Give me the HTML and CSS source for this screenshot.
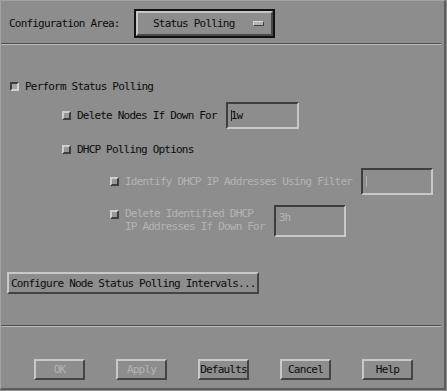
FILE: index.html
```html
<!DOCTYPE html>
<html>
<head>
<meta charset="utf-8">
<link rel="stylesheet" href="styles.css">
</head>
<body>
<div class="dialog">
  <div class="header">
    <span class="label">Configuration Area:</span>
    <div class="option">
      <div class="option-inner">
        <span class="option-text">Status Polling</span>
        <span class="indicator"></span>
      </div>
    </div>
  </div>
  <div class="sep"></div>
  <div class="work">
    <div class="row row1">
      <span class="cb cb-set"></span>
      <span class="text">Perform Status Polling</span>
    </div>
    <div class="row row2">
      <span class="cb"></span>
      <span class="text">Delete Nodes If Down For</span>
      <span class="field field-a"><span class="caret"></span>1w</span>
    </div>
    <div class="row row3">
      <span class="cb"></span>
      <span class="text">DHCP Polling Options</span>
    </div>
    <div class="row row4">
      <span class="cb"></span>
      <span class="text dis">Identify DHCP IP Addresses Using Filter</span>
      <span class="field field-b"><span class="caret"></span></span>
    </div>
    <div class="row row5">
      <span class="cb cb-top"></span>
      <span class="text dis two">Delete Identified DHCP<br>IP Addresses If Down For</span>
      <span class="field field-c"><span class="dis">3h</span></span>
    </div>
    <div class="cfg-wrap">
      <button class="btn cfg">Configure Node Status Polling Intervals...</button>
    </div>
  </div>
  <div class="sep"></div>
  <div class="buttons">
    <button class="btn act dis">OK</button>
    <button class="btn act dis">Apply</button>
    <button class="btn act">Defaults</button>
    <button class="btn act">Cancel</button>
    <button class="btn act">Help</button>
  </div>
</div>
</body>
</html>
```

FILE: styles.css
```css
html, body {
  margin: 0;
  padding: 0;
  background: #8d8d8d;
}

body {
  width: 447px;
  height: 391px;
  overflow: hidden;
  font-family: "DejaVu Sans Mono", "Liberation Mono", monospace;
  font-size: 11px;
  letter-spacing: -0.8px;
  color: #0c0c0c;
}

.dialog {
  box-sizing: border-box;
  width: 446px;
  height: 390px;
  border-top: 1px solid #a4a4a4;
  border-left: 1px solid #a4a4a4;
  border-right: 2px solid #5c5c5c;
  border-bottom: 2px solid #5c5c5c;
  display: flex;
  flex-direction: column;
}

.header {
  height: 42px;
  display: flex;
  align-items: center;
  padding-left: 8px;
}

.label {
  width: 125px;
  padding-top: 2px;
}

.option {
  box-sizing: border-box;
  width: 141px;
  height: 29px;
  border: 2px solid #111;
  margin-top: 2px;
}

.option-inner {
  box-sizing: border-box;
  height: 100%;
  border-top: 2px solid #c6c6c6;
  border-left: 2px solid #c6c6c6;
  border-right: 2px solid #4a4a4a;
  border-bottom: 2px solid #4a4a4a;
  display: flex;
  align-items: center;
  padding-left: 15px;
  padding-right: 7px;
}

.option-text {
  flex: 1;
  padding-top: 1px;
}

.indicator {
  box-sizing: border-box;
  width: 11px;
  height: 5px;
  background: #b4b4b4;
  border-top: 1px solid #dadada;
  border-left: 1px solid #dadada;
  border-right: 1px solid #404040;
  border-bottom: 1px solid #404040;
}

.sep {
  height: 0;
  border-top: 1px solid #4e4e4e;
  border-bottom: 1px solid #bcbcbc;
  margin-right: 3px;
}

.work {
  height: 280px;
  display: flex;
  flex-direction: column;
}

.row {
  display: flex;
  align-items: center;
}

.row1 { margin-top: 33px; height: 16px; padding-left: 9px; }
.row2 { margin-top: 8px; height: 27px; padding-left: 61px; }
.row3 { margin-top: 12px; height: 16px; padding-left: 61px; }
.row4 { margin-top: 11px; height: 27px; padding-left: 109px; }
.row5 { margin-top: 10px; height: 32px; padding-left: 109px; align-items: flex-start; }

.cb {
  box-sizing: border-box;
  width: 9px;
  height: 9px;
  margin-right: 6px;
  background: #979797;
  border-top: 2px solid #cecece;
  border-left: 2px solid #cecece;
  border-right: 2px solid #3e3e3e;
  border-bottom: 2px solid #3e3e3e;
  flex: none;
}

.cb-set {
  background: #a2a2a2;
  border-top-color: #3e3e3e;
  border-left-color: #3e3e3e;
  border-right-color: #d2d2d2;
  border-bottom-color: #d2d2d2;
}

.cb-top { margin-top: 5px; }

.text { white-space: nowrap; }

.two {
  line-height: 13px;
  margin-top: 2px;
}

.dis { color: #b4b4b4; }

.field {
  box-sizing: border-box;
  height: 27px;
  margin-left: 9px;
  border-top: 2px solid #3e3e3e;
  border-left: 2px solid #3e3e3e;
  border-right: 2px solid #c8c8c8;
  border-bottom: 2px solid #c8c8c8;
  display: flex;
  align-items: center;
  padding-left: 3px;
  position: relative;
}

.field-a { width: 73px; }
.field-b { width: 72px; }
.field-c { width: 72px; height: 32px; align-items: flex-start; padding-top: 4px; }

.caret {
  width: 1px;
  height: 11px;
  background: #222;
  margin-right: -1px;
}

.field-b .caret { background: #b0b0b0; }

.cfg-wrap {
  margin-top: 35px;
  padding-left: 6px;
  display: flex;
}

.btn {
  font: inherit;
  letter-spacing: inherit;
  color: #0c0c0c;
  background: #8d8d8d;
  box-sizing: border-box;
  margin: 0;
  border-top: 2px solid #c8c8c8;
  border-left: 2px solid #c8c8c8;
  border-right: 2px solid #444;
  border-bottom: 2px solid #444;
  padding: 0;
  white-space: nowrap;
}

.cfg {
  width: 252px;
  height: 22px;
  text-align: left;
  padding-left: 2px;
}

.buttons {
  display: flex;
  gap: 31px;
  padding-left: 33px;
  margin-top: 32px;
}

.act {
  width: 51px;
  height: 21px;
  text-align: center;
}

.act.dis { color: #b4b4b4; }
```
